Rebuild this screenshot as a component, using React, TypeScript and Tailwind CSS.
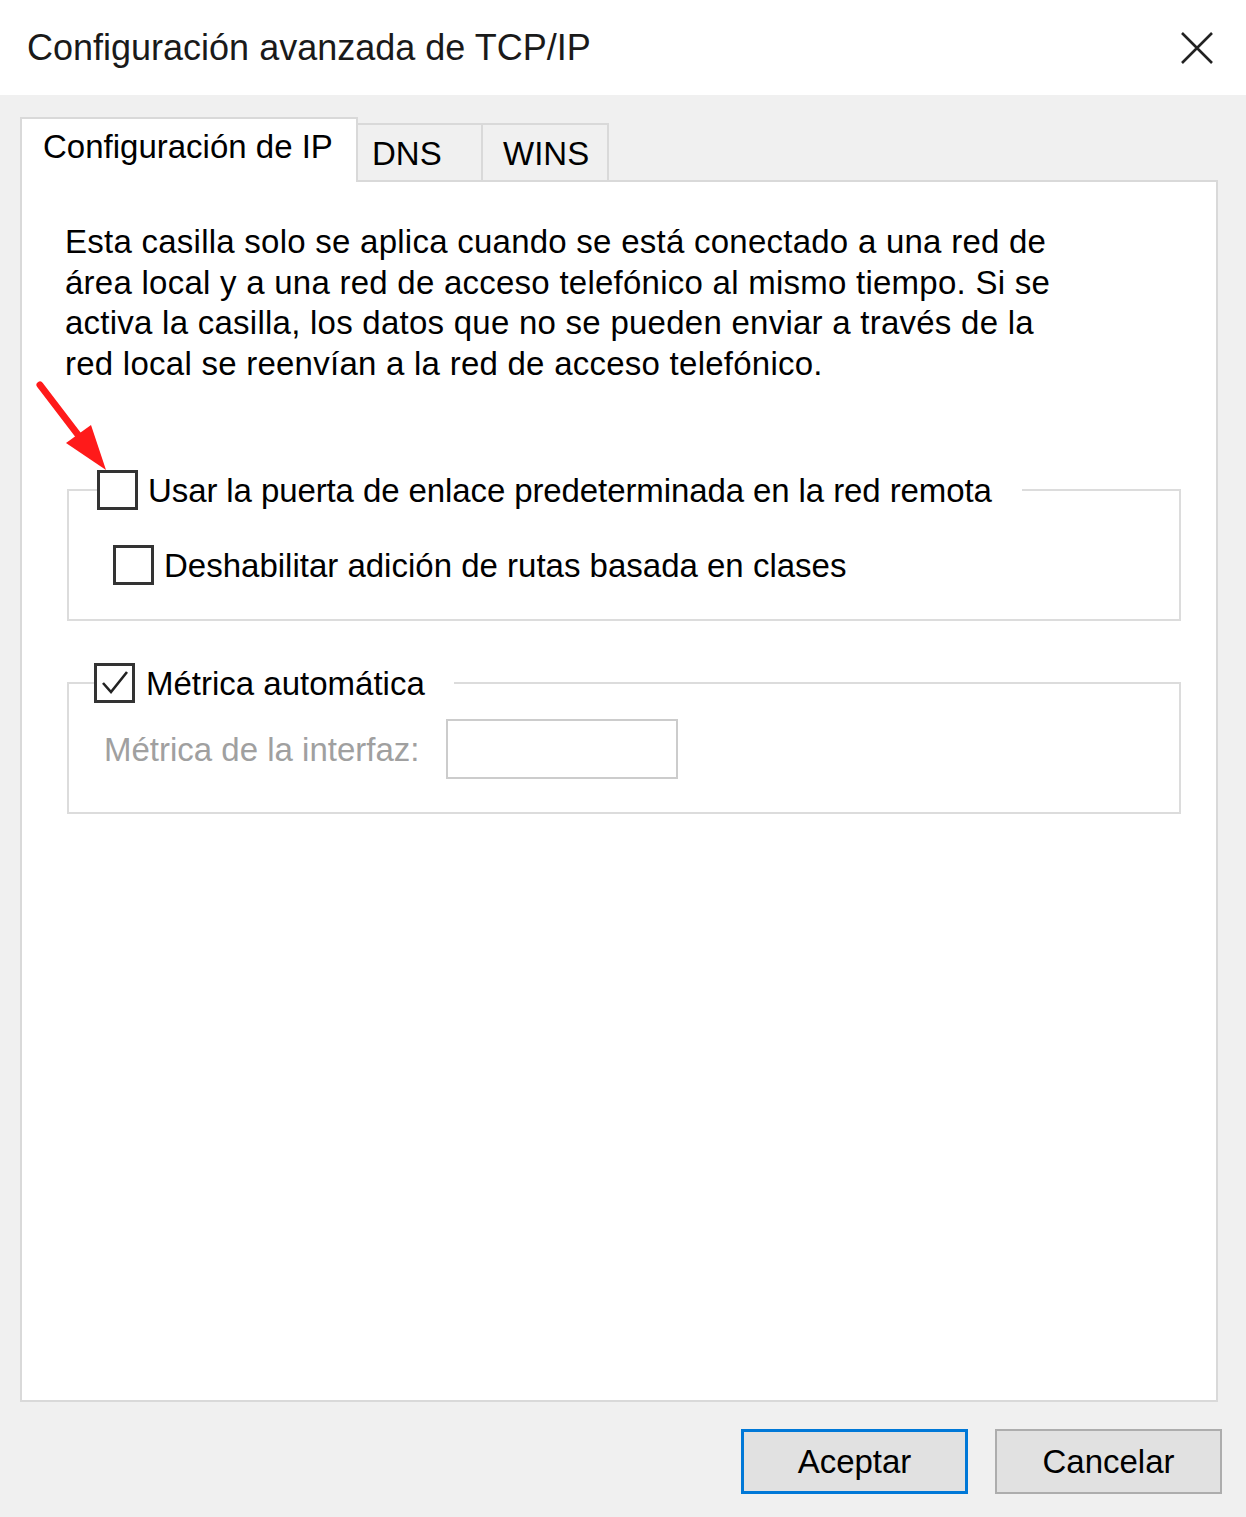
import React from 'react';

const font = "font-['Liberation_Sans',Arial,sans-serif]";

function CheckBox({ checked = false }: { checked?: boolean }) {
  return (
    <div className="w-[41px] h-[40px] shrink-0 border-[3px] border-[#333333] bg-white flex items-center justify-center">
      {checked && (
        <svg width="32" height="30" viewBox="0 0 32 30">
          <path d="M4 15 L12 24 L28 4" fill="none" stroke="#222" strokeWidth="2.6" />
        </svg>
      )}
    </div>
  );
}

export default function App() {
  const paragraph = [
    'Esta casilla solo se aplica cuando se está conectado a una red de',
    'área local y a una red de acceso telefónico al mismo tiempo. Si se',
    'activa la casilla, los datos que no se pueden enviar a través de la',
    'red local se reenvían a la red de acceso telefónico.',
  ];

  return (
    <div className={`relative w-[1246px] h-[1517px] bg-white flex flex-col text-black ${font}`}>
      {/* barra de título */}
      <header className="h-[95px] shrink-0 flex items-center justify-between pl-[27px] pr-[33px]">
        <h1 className="text-[36px] leading-none text-[#1a1a1a]">Configuración avanzada de TCP/IP</h1>
        <svg width="32" height="32" viewBox="0 0 32 32">
          <path d="M1 1 L31 31 M31 1 L1 31" stroke="#222" strokeWidth="2.6" />
        </svg>
      </header>

      <div className="flex-1 bg-[#f0f0f0] flex flex-col pl-[20px] pr-[28px] pt-[22px] pb-[23px]">
        {/* pestañas */}
        <div className="flex items-end">
          <div className="relative z-10 w-[338px] h-[65px] -mb-[2px] bg-white border-2 border-b-0 border-[#d9d9d9] pl-[21px] pt-[11px] text-[33px] leading-none">
            Configuración de IP
          </div>
          <div className="w-[125px] h-[57px] border-t-2 border-r-2 border-[#d9d9d9] bg-[#f0f0f0] pl-[14px] pt-[12px] text-[33px] leading-none">
            DNS
          </div>
          <div className="w-[126px] h-[57px] border-t-2 border-r-2 border-[#d9d9d9] bg-[#f0f0f0] pl-[20px] pt-[12px] text-[33px] leading-none">
            WINS
          </div>
        </div>

        {/* panel */}
        <div className="flex-1 bg-white border-2 border-[#d9d9d9] pt-[40px] pl-[43px]">
          <div className="text-[33px] leading-[40.5px] tracking-[0.25px]">
            {paragraph.map((line, i) => (
              <div key={i} className="whitespace-nowrap">{line}</div>
            ))}
          </div>

          <fieldset className="mt-[86px] ml-[2px] w-[1114px] border-2 border-[#dcdcdc] pl-[28px] pb-[34px]">
            <legend className="flex items-center pr-[30px]">
              <CheckBox />
              <span className="ml-[10px] text-[33px] leading-none whitespace-nowrap tracking-[-0.1px]">
                Usar la puerta de enlace predeterminada en la red remota
              </span>
            </legend>
            <div className="mt-[35px] ml-[16px] flex items-center">
              <CheckBox />
              <span className="ml-[10px] text-[33px] leading-none whitespace-nowrap">
                Deshabilitar adición de rutas basada en clases
              </span>
            </div>
          </fieldset>

          <fieldset className="mt-[42px] ml-[2px] w-[1114px] border-2 border-[#dcdcdc] pl-[25px] pb-[33px]">
            <legend className="flex items-center pr-[29px]">
              <CheckBox checked />
              <span className="ml-[11px] text-[33px] leading-none whitespace-nowrap">Métrica automática</span>
            </legend>
            <div className="mt-[16px] ml-[10px] flex items-center">
              <span className="text-[33px] leading-none text-[#a0a0a0] whitespace-nowrap">Métrica de la interfaz:</span>
              <div className="ml-[27px] w-[232px] h-[60px] border-2 border-[#cccccc] bg-white" />
            </div>
          </fieldset>
        </div>

        {/* botones */}
        <div className="mt-[27px] -mr-[4px] flex justify-end gap-[27px]">
          <button className="w-[227px] h-[65px] border-[3px] border-[#0078d7] bg-[#e1e1e1] text-[33px] leading-none">
            Aceptar
          </button>
          <button className="w-[227px] h-[65px] border-2 border-[#adadad] bg-[#e1e1e1] text-[33px] leading-none">
            Cancelar
          </button>
        </div>
      </div>

      {/* flecha roja */}
      <svg className="absolute left-0 top-0 pointer-events-none" width="130" height="490" viewBox="0 0 130 490">
        <path d="M40 385 L82 440" stroke="#ff1a1a" strokeWidth="7" strokeLinecap="round" />
        <path d="M66 443 L91 425 L106 470 Z" fill="#ff1a1a" />
      </svg>
    </div>
  );
}
